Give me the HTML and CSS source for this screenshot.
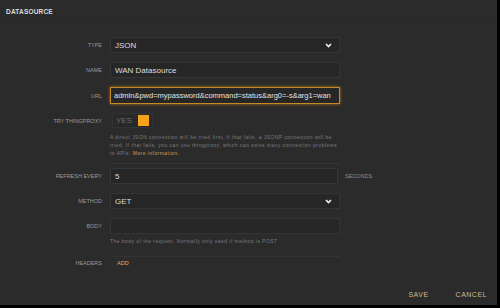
FILE: index.html
```html
<!DOCTYPE html>
<html lang="en">
  <head>
    <meta charset="UTF-8" />
    <title>Datasource</title>
    <link rel="stylesheet" href="styles.css">
  </head>
  <body>
    <div class="modal">
      <header class="modal-head">DATASOURCE</header>

      <div class="form">
        <div class="row">
          <label class="lbl">TYPE</label>
          <div class="field select">
            <span>JSON</span>
            <svg class="chev" width="7" height="5" viewBox="0 0 7 5"><path d="M1 1 L3.5 3.5 L6 1" fill="none" stroke="#eee" stroke-width="1.7"/></svg>
          </div>
        </div>

        <div class="row">
          <label class="lbl">NAME</label>
          <div class="field">WAN Datasource</div>
        </div>

        <div class="row">
          <label class="lbl">URL</label>
          <div class="field focus">admin&amp;pwd=mypassword&amp;command=status&amp;arg0=-s&amp;arg1=wan</div>
        </div>

        <div class="row row-proxy">
          <label class="lbl">TRY THINGPROXY</label>
          <div class="toggle"><span>YES</span><i class="knob"></i></div>
        </div>
        <p class="help">A direct JSON connection will be tried first, if that fails, a JSONP connection will be<br>tried. If that fails, you can use thingproxy, which can solve many connection problems<br>to APIs. <a>More information.</a></p>

        <div class="row row-sep">
          <label class="lbl">REFRESH EVERY</label>
          <div class="field short">5</div>
          <span class="unit">SECONDS</span>
        </div>

        <div class="row">
          <label class="lbl">METHOD</label>
          <div class="field select">
            <span>GET</span>
            <svg class="chev" width="7" height="5" viewBox="0 0 7 5"><path d="M1 1 L3.5 3.5 L6 1" fill="none" stroke="#eee" stroke-width="1.7"/></svg>
          </div>
        </div>

        <div class="row row-body">
          <label class="lbl">BODY</label>
          <div class="field"></div>
        </div>
        <p class="help">The body of the request. Normally only used if method is POST</p>

        <div class="row row-sep row-headers">
          <label class="lbl">HEADERS</label>
          <a class="add">ADD</a>
        </div>
      </div>

      <footer class="actions">
        <a>SAVE</a>
        <a>CANCEL</a>
      </footer>
    </div>
  </body>
</html>
```

FILE: styles.css
```css
html, body {
  margin: 0;
  padding: 0;
  background: #000;
}
body {
  width: 500px;
  height: 308px;
  font-family: "Liberation Sans", Arial, sans-serif;
  color: #ccc;
}
.modal {
  width: 497px;
  height: 305px;
  background: #2b2b2b;
  display: flex;
  flex-direction: column;
}
.modal-head {
  height: 22px;
  line-height: 23px;
  padding-left: 6px;
  font-size: 6.5px;
  font-weight: bold;
  letter-spacing: 0.2px;
  color: #ddd;
  border-bottom: 1px solid #282828;
}
.form {
  padding-top: 14px;
}
.row {
  display: flex;
  align-items: center;
  margin-bottom: 9px;
}
.lbl {
  width: 102px;
  text-align: right;
  padding-right: 8px;
  font-size: 5.5px;
  color: #9a9a9a;
  flex-shrink: 0;
}
.field {
  width: 230px;
  height: 16px;
  flex-shrink: 0;
  box-sizing: border-box;
  background: #262626;
  border: 1px solid #353535;
  font-size: 8px;
  color: #ddd;
  padding: 0 4px;
  display: flex;
  align-items: center;
  white-space: nowrap;
  overflow: hidden;
}
.field.short {
  width: 228px;
}
.select {
  justify-content: space-between;
}
.chev {
  margin-right: 3px;
}
.focus {
  border-color: #c68a22;
  box-shadow: 0 0 3px rgba(255, 160, 30, 0.6);
  color: #e2e2e2;
  height: 17px;
  font-size: 7.5px;
  padding: 0 2px 0 3px;
}
.row-proxy {
  margin-bottom: 6px;
}
.toggle {
  width: 41px;
  height: 15px;
  box-sizing: border-box;
  border: 1px solid #333;
  background: #292929;
  margin-left: 2px;
  display: flex;
  align-items: center;
  padding-left: 3px;
  gap: 6px;
  font-size: 8px;
  color: #6a6a6a;
}
.knob {
  width: 11px;
  height: 11px;
  background: #f7a21b;
}
.help {
  margin: 0 0 0 110px;
  font-size: 4.9px;
  line-height: 8px;
  letter-spacing: 0.5px;
  white-space: nowrap;
  color: #7e7e7e;
  padding-bottom: 5px;
}
.help a {
  color: #d4a055;
}
.row-sep {
  border-top: 1px solid #343434;
  margin-left: 110px;
  padding-top: 4px;
  width: 230px;
}
.row-sep .lbl {
  margin-left: -110px;
}
.unit {
  font-size: 5.5px;
  color: #8f8f8f;
  margin-left: 7px;
  white-space: nowrap;
}
.row-body {
  margin-bottom: 4px;
}
.row-headers {
  margin-top: 5px;
  padding-top: 3px;
}
.add {
  font-size: 5.5px;
  color: #d8b060;
  margin-left: 7px;
}
.actions {
  margin-top: auto;
  display: flex;
  justify-content: flex-end;
  gap: 27px;
  padding: 0 10px 7px 0;
  font-size: 7px;
  letter-spacing: 0.5px;
  color: #d3b98c;
}
```
